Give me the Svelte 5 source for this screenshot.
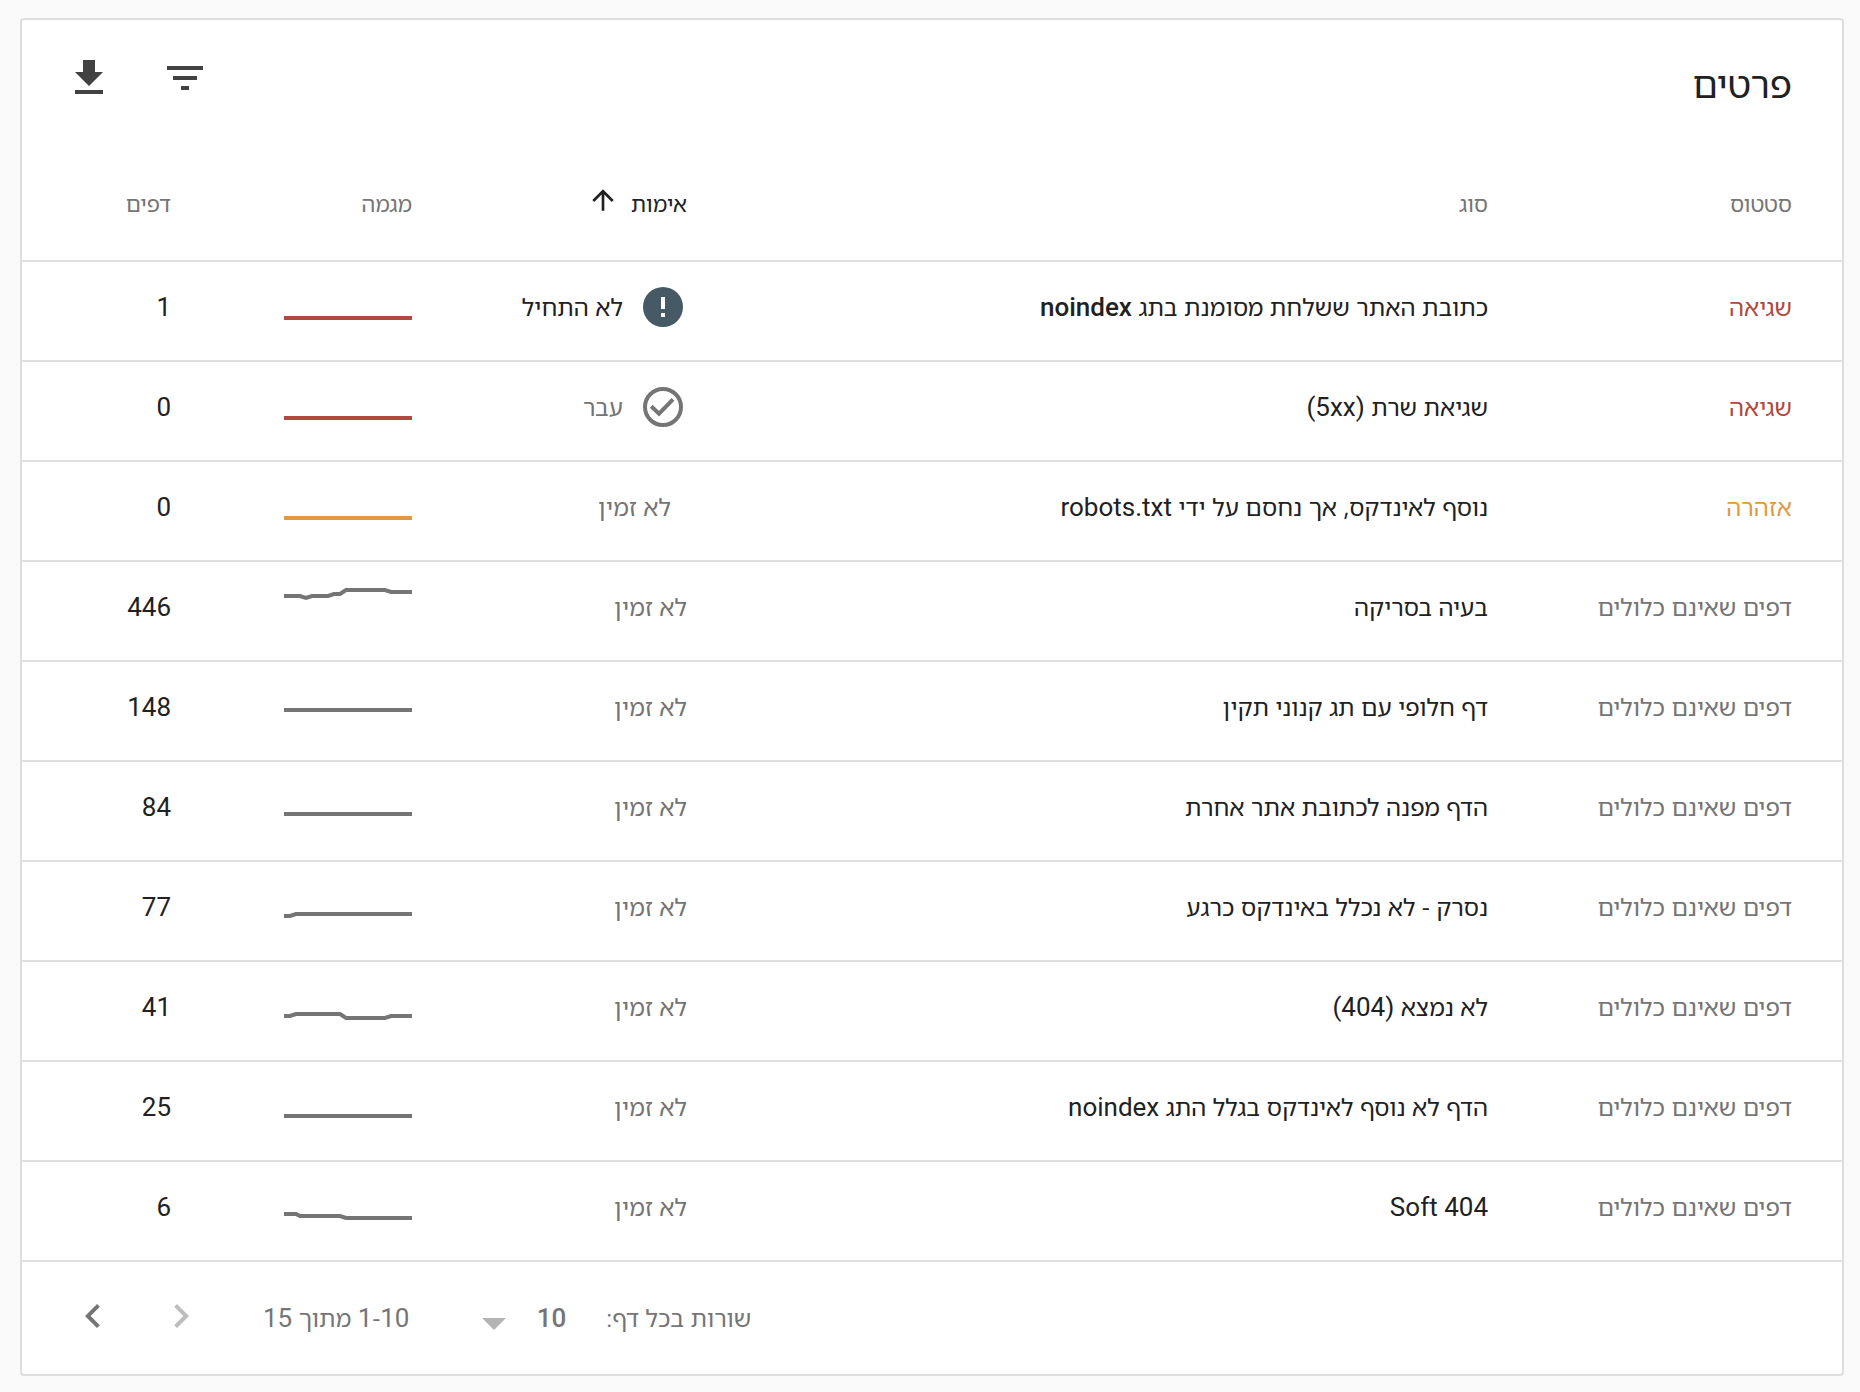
<script>
  const columns = [
    { key: 'status', label: 'סטטוס' },
    { key: 'type', label: 'סוג' },
    { key: 'validation', label: 'אימות' },
    { key: 'trend', label: 'מגמה' },
    { key: 'pages', label: 'דפים' }
  ];

  const excluded = 'דפים שאינם כלולים';
  const unavailable = 'לא זמין';

  const rows = [
    { level: 'error', status: 'שגיאה', type: 'כתובת האתר ששלחת מסומנת בתג', tag: 'noindex', state: 'pending', validation: 'לא התחיל', trend: '0,43 128,43', pages: 1 },
    { level: 'error', status: 'שגיאה', type: 'שגיאת שרת (5xx)', state: 'passed', validation: 'עבר', trend: '0,43 128,43', pages: 0 },
    { level: 'warning', status: 'אזהרה', type: 'נוסף לאינדקס, אך נחסם על ידי robots.txt', state: 'indent', validation: unavailable, trend: '0,43 128,43', pages: 0 },
    { level: 'excluded', status: excluded, type: 'בעיה בסריקה', validation: unavailable, trend: '0,21 16,21 22,23 28,21 44,21 50,19 56,19 62,15 101,15 107,17 128,17', pages: 446 },
    { level: 'excluded', status: excluded, type: 'דף חלופי עם תג קנוני תקין', validation: unavailable, trend: '0,35 128,35', pages: 148 },
    { level: 'excluded', status: excluded, type: 'הדף מפנה לכתובת אתר אחרת', validation: unavailable, trend: '0,39 128,39', pages: 84 },
    { level: 'excluded', status: excluded, type: 'נסרק - לא נכלל באינדקס כרגע', validation: unavailable, trend: '0,41 6,41 12,39 128,39', pages: 77 },
    { level: 'excluded', status: excluded, type: 'לא נמצא (404)', validation: unavailable, trend: '0,41 6,41 12,39 56,39 62,43 101,43 107,41 128,41', pages: 41 },
    { level: 'excluded', status: excluded, type: 'הדף לא נוסף לאינדקס בגלל התג noindex', validation: unavailable, trend: '0,41 128,41', pages: 25 },
    { level: 'excluded', status: excluded, type: 'Soft 404', validation: unavailable, trend: '0,39 12,39 16,41 56,41 62,43 128,43', pages: 6 }
  ];

  let pageSize = $state('10');

  // Latin words and digits are set in Roboto, a size larger than the Hebrew
  function splitRuns(text) {
    return text
      .split(/([A-Za-z0-9().]+)/)
      .filter((part) => part !== '')
      .map((part) => ({ text: part, latin: /[A-Za-z0-9]/.test(part) }));
  }
</script>

{#snippet mixed(text)}
  {#each splitRuns(text) as run}{#if run.latin}<span class="latin">{run.text}</span>{:else}{run.text}{/if}{/each}
{/snippet}

<section class="card" dir="rtl" lang="he">
  <header class="toolbar">
    <h2 class="title">פרטים</h2>
    <div class="actions">
      <button class="icon-btn" aria-label="סינון">
        <svg viewBox="0 0 24 24"><path d="M10 18h4v-2h-4v2zM3 6v2h18V6H3zm3 7h12v-2H6v2z" /></svg>
      </button>
      <button class="icon-btn" aria-label="הורדה">
        <svg viewBox="0 0 24 24"><path d="M19 9h-4V3H9v6H5l7 7 7-7zM5 18v2h14v-2H5z" /></svg>
      </button>
    </div>
  </header>

  <table class="table">
    <thead>
      <tr>
        {#each columns as column (column.key)}
          {#if column.key === 'validation'}
            <th class="col-validation" aria-sort="ascending">
              <button class="sort-btn">
                {column.label}
                <svg class="sort-icon" viewBox="0 0 24 24">
                  <path d="M4 12l1.41 1.41L11 7.83V20h2V7.83l5.58 5.59L20 12l-8-8-8 8z" />
                </svg>
              </button>
            </th>
          {:else}
            <th class="col-{column.key}">{column.label}</th>
          {/if}
        {/each}
      </tr>
    </thead>
    <tbody>
      {#each rows as row}
        <tr class={row.level}>
          <td class="status">{row.status}</td>
          <td>{@render mixed(row.type)} {#if row.tag}<b class="latin">{row.tag}</b>{/if}</td>
          <td>
            <div class="validation {row.state}">
              {#if row.state === 'pending'}
                <svg class="state-icon" viewBox="0 0 24 24">
                  <path d="M12 2a10 10 0 1 0 0 20 10 10 0 0 0 0-20zm1 15h-2v-2h2v2zm0-4h-2V7h2v6z" />
                </svg>
              {:else if row.state === 'passed'}
                <svg class="state-icon" viewBox="0 0 24 24">
                  <circle cx="12" cy="12" r="9" />
                  <path d="M6.1 11.6l3.9 3.7 7-7.1" />
                </svg>
              {/if}
              <span>{row.validation}</span>
            </div>
          </td>
          <td>
            <svg class="trend" viewBox="0 0 128 64"><polyline points={row.trend} /></svg>
          </td>
          <td class="latin">{row.pages}</td>
        </tr>
      {/each}
    </tbody>
  </table>

  <footer class="pagination">
    <label for="page-size">שורות בכל דף:</label>
    <div class="select-wrap">
      <select id="page-size" class="latin" bind:value={pageSize}>
        <option value="10">10</option>
        <option value="25">25</option>
        <option value="50">50</option>
      </select>
      <svg class="caret" viewBox="0 0 24 12"><path d="M0 0h24L12 12z" /></svg>
    </div>
    <span class="range">{@render mixed('1-10 מתוך 15')}</span>
    <div class="pager">
      <button class="icon-btn" aria-label="הדף הקודם" disabled>
        <svg viewBox="0 0 24 24"><path d="M10 6L8.59 7.41 13.17 12l-4.58 4.59L10 18l6-6z" /></svg>
      </button>
      <button class="icon-btn" aria-label="הדף הבא">
        <svg viewBox="0 0 24 24"><path d="M14 6l1.41 1.41L10.83 12l4.58 4.59L14 18l-6-6z" /></svg>
      </button>
    </div>
  </footer>
</section>

<style>
  :global(body) {
    background: #fafafa;
  }

  .card {
    margin: 18px 16px 16px 20px;
    border: 2px solid #dedede;
    border-radius: 4px;
    background: #fff;
    color: #212121;
    font-family: 'Noto Sans Hebrew', 'Noto Sans', 'Open Sans', sans-serif;
    font-size: 24px;
    line-height: 32px;
  }

  button,
  select {
    border: none;
    padding: 0;
    background: none;
    color: inherit;
    font: inherit;
    cursor: pointer;
  }

  svg {
    display: block;
    fill: currentColor;
  }

  .latin {
    font-family: Roboto, sans-serif;
    font-size: 26px;
  }

  .toolbar {
    display: flex;
    align-items: center;
    justify-content: space-between;
    height: 128px;
    padding: 0 50px 0 43px;
    box-sizing: border-box;
  }

  .title {
    margin: 0;
    font-size: 37px;
    font-weight: 400;
    line-height: 48px;
  }

  .actions {
    display: flex;
    gap: 48px;
    padding-bottom: 12px;
    color: #424242;
  }

  .icon-btn,
  .icon-btn svg {
    width: 48px;
    height: 48px;
  }

  .icon-btn:disabled {
    color: #bdbdbd;
    cursor: default;
  }

  .table {
    width: 100%;
    border-collapse: separate;
    border-spacing: 0;
    table-layout: fixed;
  }

  th,
  td {
    box-sizing: border-box;
    padding: 0 50px 8px 0;
    border-bottom: 2px solid #e0e0e0;
    text-align: right;
    vertical-align: middle;
    white-space: nowrap;
  }

  th {
    height: 114px;
    padding-bottom: 0;
    color: #757575;
    font-size: 22px;
    font-weight: 400;
  }

  td {
    height: 100px;
  }

  .col-status {
    width: 304px;
  }

  .col-validation {
    width: 275px;
    color: #212121;
  }

  .col-trend {
    width: 241px;
  }

  .col-pages {
    width: 199px;
  }

  .sort-btn {
    display: flex;
    align-items: center;
    gap: 12px;
  }

  .sort-icon {
    width: 32px;
    height: 32px;
    margin-bottom: 8px;
  }

  b {
    font-weight: 500;
  }

  .status,
  .validation {
    color: #757575;
  }

  .error {
    --level: #b04a3e;
  }

  .warning {
    --level: #e09a45;
  }

  .excluded {
    --level: #757575;
  }

  .status {
    color: var(--level);
  }

  .validation {
    display: flex;
    align-items: center;
    gap: 16px;
  }

  .pending {
    color: #212121;
  }

  .indent {
    padding-right: 16px;
  }

  .state-icon {
    width: 48px;
    height: 48px;
  }

  .pending .state-icon {
    fill: #455a64;
  }

  .passed .state-icon {
    fill: none;
    stroke: currentColor;
    stroke-width: 2;
  }

  .trend {
    width: 128px;
    height: 64px;
    fill: none;
    stroke: var(--level);
    stroke-width: 4;
  }

  .pagination {
    display: flex;
    align-items: center;
    justify-content: flex-end;
    height: 112px;
    padding-left: 47px;
    color: #757575;
  }

  .select-wrap {
    position: relative;
    margin: 0 40px 0 73px;
  }

  select {
    display: block;
    width: 84px;
    appearance: none;
    font-weight: 500;
  }

  .caret {
    position: absolute;
    left: 0;
    top: 50%;
    width: 24px;
    height: 12px;
    color: #b3b3b3;
    pointer-events: none;
  }

  .pager {
    display: flex;
    gap: 40px;
    margin-right: 58px;
    padding-bottom: 4px;
  }
</style>
